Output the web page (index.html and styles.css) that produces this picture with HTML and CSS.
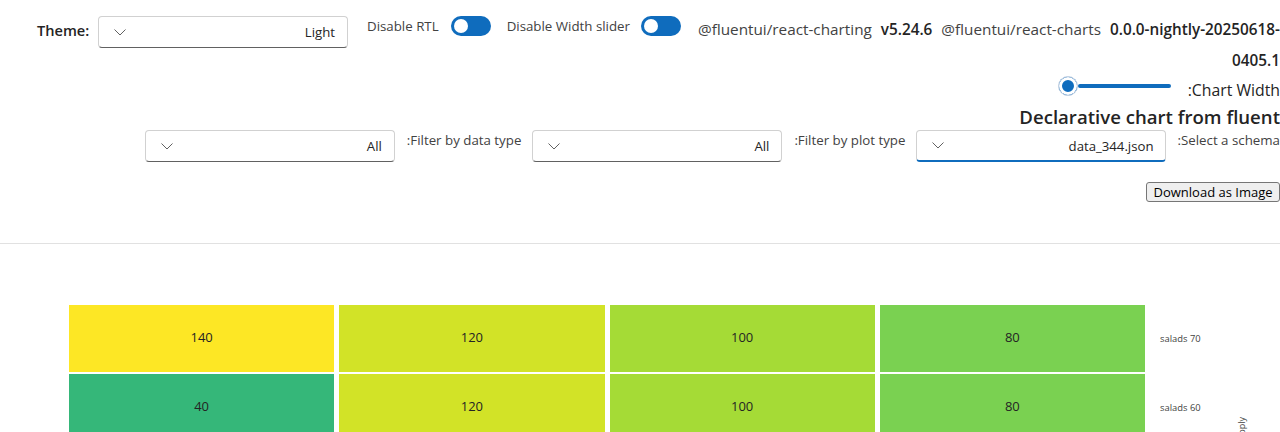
FILE: index.html
```html
<!DOCTYPE html>
<html lang="en">
<head>
    <meta charset="UTF-8">
    <meta name="viewport" content="width=device-width, initial-scale=1.0">
    <title>Declarative chart</title>
    <link rel="stylesheet" href="styles.css">
</head>
<body>
    <div class="top-row">
        <label class="theme-label">Theme:</label>
        <div class="dropdown">
            <svg class="chevron" viewBox="0 0 12 7"><path d="M0.5 0.5 L6 6 L11.5 0.5"/></svg>
            <span>Light</span>
        </div>
        <span class="switch-label rtl-label">Disable RTL</span>
        <span class="switch"><span class="knob"></span></span>
        <span class="switch-label width-label">Disable Width slider</span>
        <span class="switch"><span class="knob"></span></span>
        <div class="versions">
            <span>@fluentui/react-charting</span>
            <b>v5.24.6</b>
            <span>@fluentui/react-charts</span>
            <b>0.0.0-nightly-20250618-0405.1</b>
        </div>
    </div>

    <div class="slider-row">
        <div class="slider"><span class="thumb"></span><span class="rail"></span></div>
        <span class="slider-label">:Chart Width</span>
    </div>

    <h2 class="title">Declarative chart from fluent</h2>

    <div class="filter-row">
        <div class="dropdown">
            <svg class="chevron" viewBox="0 0 12 7"><path d="M0.5 0.5 L6 6 L11.5 0.5"/></svg>
            <span>All</span>
        </div>
        <span class="filter-label">:Filter by data type</span>
        <div class="dropdown">
            <svg class="chevron" viewBox="0 0 12 7"><path d="M0.5 0.5 L6 6 L11.5 0.5"/></svg>
            <span>All</span>
        </div>
        <span class="filter-label">:Filter by plot type</span>
        <div class="dropdown focused">
            <svg class="chevron" viewBox="0 0 12 7"><path d="M0.5 0.5 L6 6 L11.5 0.5"/></svg>
            <span>data_344.json</span>
        </div>
        <span class="filter-label schema-label">:Select a schema</span>
    </div>

    <div class="download-row">
        <button class="download">Download as Image</button>
    </div>

    <hr class="divider">

    <div class="chart">
        <div class="heatmap">
            <div class="cell c140">140</div>
            <div class="cell c120">120</div>
            <div class="cell c100">100</div>
            <div class="cell c80">80</div>
            <div class="y-tick">salads 70</div>
            <div class="cell c40">40</div>
            <div class="cell c120">120</div>
            <div class="cell c100">100</div>
            <div class="cell c80">80</div>
            <div class="y-tick">salads 60</div>
        </div>
        <span class="axis-title">Supply</span>
    </div>
</body>
</html>
```

FILE: styles.css
```css
html, body {
    height: 432px;
    overflow: hidden;
}
body {
    margin: 0;
    font-family: "Open Sans", "Noto Sans", sans-serif;
    color: #242424;
    background-color: #fff;
}
.top-row {
    display: flex;
    align-items: flex-start;
    padding-left: 37px;
    height: 72px;
}
.theme-label {
    width: 53px;
    margin-top: 20px;
    margin-right: 8px;
    font-size: 14.6px;
    font-weight: 600;
    line-height: 20px;
    white-space: nowrap;
}
.dropdown {
    box-sizing: border-box;
    display: flex;
    align-items: center;
    justify-content: space-between;
    flex: none;
    width: 250px;
    height: 32px;
    margin-top: 16px;
    padding: 0 12px 0 15px;
    border: 1px solid #d1d1d1;
    border-bottom-color: #616161;
    border-radius: 4px;
    font-size: 13.2px;
}
.focused {
    border-bottom: 2px solid #0f6cbd;
}
.chevron {
    width: 12px;
    height: 7px;
    fill: none;
    stroke: #616161;
    stroke-width: 1;
}
.switch-label {
    margin-top: 17px;
    font-size: 13.3px;
    line-height: 18px;
    color: #424242;
}
.rtl-label {
    margin-left: 19px;
    margin-right: 12px;
}
.width-label {
    margin-left: 16px;
    margin-right: 11px;
}
.switch {
    box-sizing: border-box;
    display: flex;
    align-items: center;
    flex: none;
    width: 40px;
    height: 20px;
    margin-top: 16px;
    padding-left: 3px;
    border-radius: 10px;
    background-color: #0f6cbd;
}
.knob {
    width: 14px;
    height: 14px;
    border-radius: 50%;
    background-color: #fff;
}
.versions {
    flex: 1;
    margin-left: 16px;
    margin-top: 14px;
    font-size: 15.3px;
    line-height: 31px;
    text-align: right;
    color: #424242;
}
.versions span {
    margin-right: 5px;
}
.versions b {
    margin-right: 5px;
    font-weight: 600;
    color: #242424;
}
.versions b:last-child {
    margin-right: 0;
}
.slider-row {
    display: flex;
    justify-content: flex-end;
    align-items: flex-start;
    height: 32px;
}
.slider {
    display: flex;
    align-items: center;
    margin-top: 4px;
    margin-right: 17px;
}
.thumb {
    box-sizing: border-box;
    width: 20px;
    height: 20px;
    border: 1px solid #c8d4e4;
    border-radius: 50%;
    background-color: #0f6cbd;
    box-shadow: inset 0 0 0 3px #fff;
}
.rail {
    width: 93px;
    height: 4px;
    border-radius: 2px;
    background-color: #0f6cbd;
}
.slider-label {
    margin-top: 8px;
    font-size: 15.8px;
    line-height: 20px;
}
.title {
    margin: 0;
    font-size: 18.6px;
    font-weight: 600;
    line-height: 26px;
    text-align: right;
}
.filter-row {
    display: flex;
    justify-content: flex-end;
    align-items: flex-start;
    height: 52px;
}
.filter-row .dropdown {
    margin-top: 0;
}
.filter-label {
    margin: 1px 11px 0 12px;
    font-size: 13.3px;
    line-height: 18px;
    color: #424242;
}
.schema-label {
    margin-left: 11px;
    margin-right: 0;
}
.download-row {
    display: flex;
    justify-content: flex-end;
    height: 61px;
}
.download {
    box-sizing: border-box;
    width: 134px;
    height: 20px;
    padding: 0;
    border: 1px solid #767676;
    border-radius: 3px;
    font-family: inherit;
    font-size: 13px;
    color: #000;
    background-color: #efefef;
}
.divider {
    margin: 0;
    border: 0;
    border-top: 1px solid #e1e1e1;
}
.chart {
    position: relative;
    padding: 61px 0 0 69px;
}
.heatmap {
    display: grid;
    grid-template-columns: 265.25px 265.25px 265.25px 265.25px 120px;
    grid-auto-rows: 67px;
    column-gap: 5px;
    row-gap: 2px;
}
.cell {
    display: flex;
    align-items: center;
    justify-content: center;
    padding-bottom: 3px;
    font-size: 13px;
}
.c140 { background-color: #fde725; }
.c120 { background-color: #d2e327; }
.c100 { background-color: #a5db36; }
.c80 { background-color: #7ad151; }
.c40 { background-color: #35b779; }
.y-tick {
    align-self: center;
    margin-left: 10px;
    font-size: 9.4px;
    color: #424242;
}
.axis-title {
    position: absolute;
    left: 1235px;
    top: 173px;
    writing-mode: vertical-rl;
    transform: rotate(180deg);
    font-size: 9px;
    color: #424242;
}
```
